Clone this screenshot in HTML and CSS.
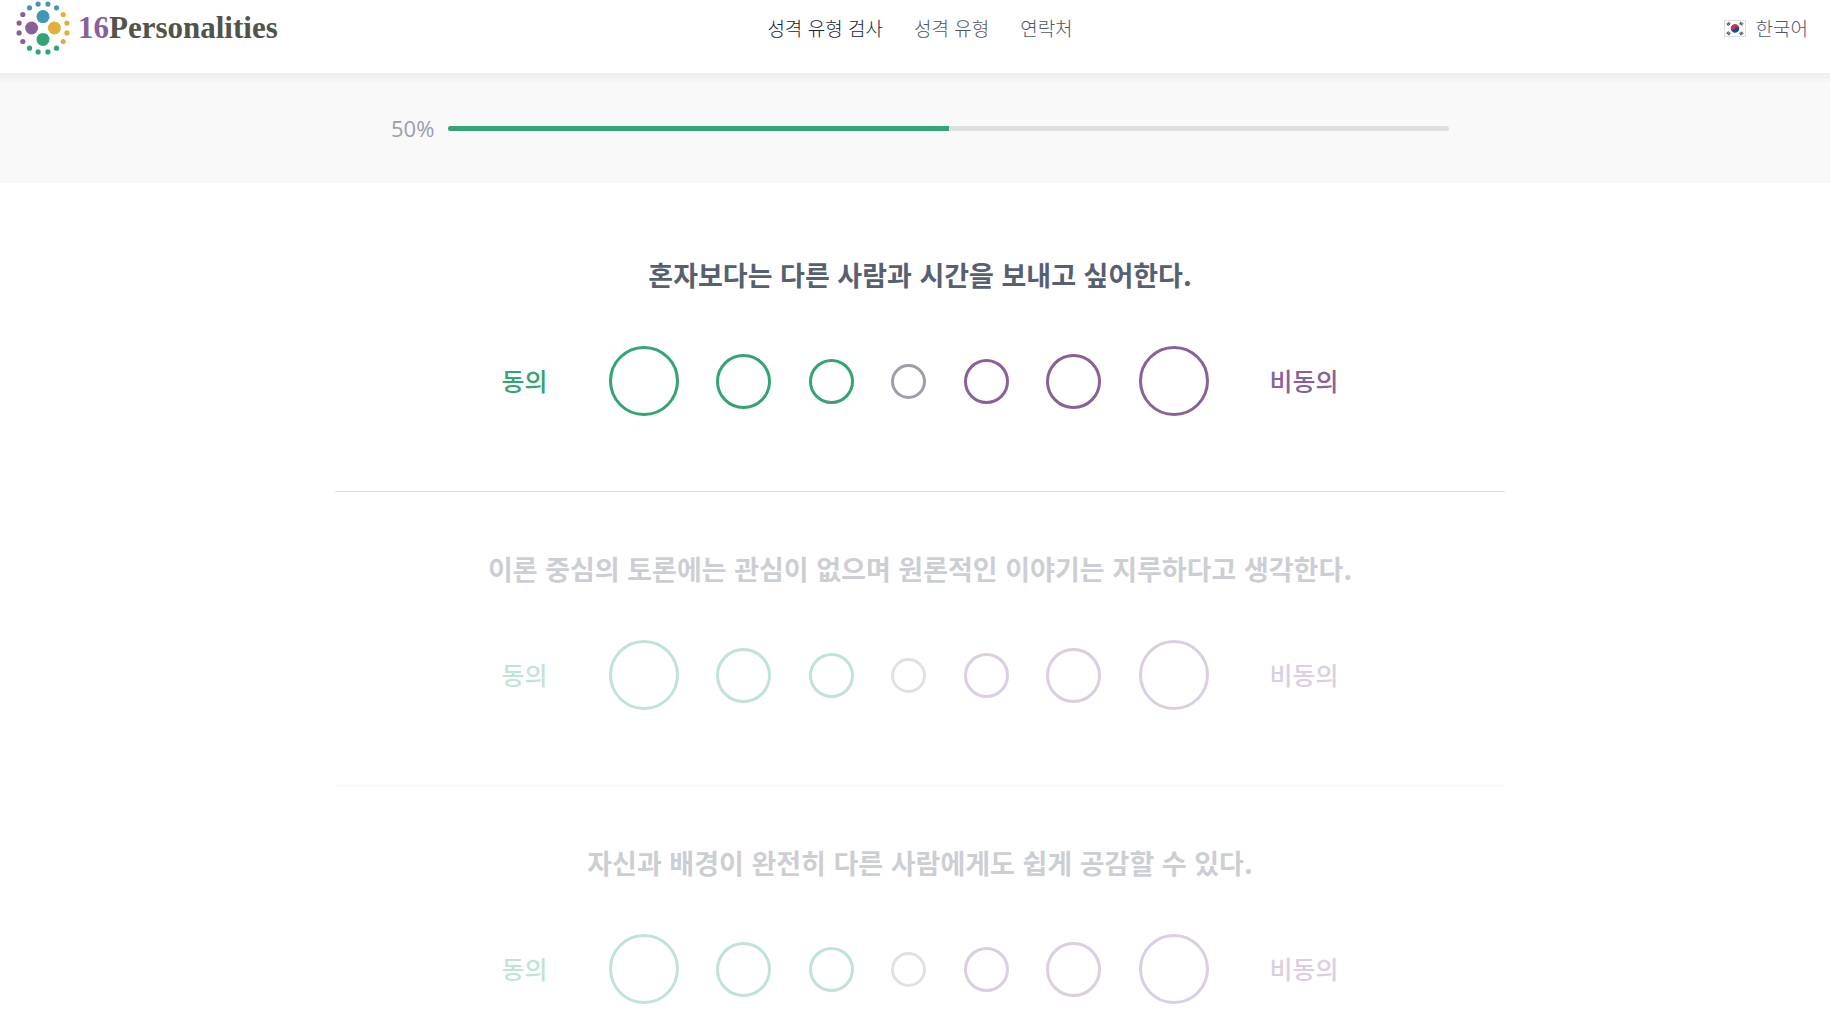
FILE: index.html
```html
<!DOCTYPE html>
<html lang="ko">
<head>
    <meta charset="UTF-8">
    <meta name="viewport" content="width=device-width, initial-scale=1.0">
    <title>성격 유형 검사 | 16Personalities</title>
    <link rel="stylesheet" href="styles.css">
</head>
<body>
    <header class="header">
        <a class="logo" href="#home">
            <svg class="logo-icon" viewBox="-27 -27 54 54" aria-hidden="true">
                <g fill="#4298b4">
                    <circle cx="0" cy="-11.4" r="6.5"/>
                    <circle cx="-13.5" cy="-20.2" r="2.6"/>
                    <circle cx="-4.9" cy="-23.9" r="2.6"/>
                    <circle cx="4.9" cy="-23.9" r="2.6"/>
                    <circle cx="13.5" cy="-20.2" r="2.6"/>
                </g>
                <g fill="#e4ae3a">
                    <circle cx="11.4" cy="0" r="6.5"/>
                    <circle cx="20.2" cy="-13.5" r="2.6"/>
                    <circle cx="23.9" cy="-4.9" r="2.6"/>
                    <circle cx="23.9" cy="4.9" r="2.6"/>
                    <circle cx="20.2" cy="13.5" r="2.6"/>
                </g>
                <g fill="#33a474">
                    <circle cx="0" cy="11.4" r="6.5"/>
                    <circle cx="13.5" cy="20.2" r="2.6"/>
                    <circle cx="4.9" cy="23.9" r="2.6"/>
                    <circle cx="-4.9" cy="23.9" r="2.6"/>
                    <circle cx="-13.5" cy="20.2" r="2.6"/>
                </g>
                <g fill="#88619a">
                    <circle cx="-11.4" cy="0" r="6.5"/>
                    <circle cx="-20.2" cy="13.5" r="2.6"/>
                    <circle cx="-23.9" cy="4.9" r="2.6"/>
                    <circle cx="-23.9" cy="-4.9" r="2.6"/>
                    <circle cx="-20.2" cy="-13.5" r="2.6"/>
                </g>
            </svg>
            <span class="logo-text"><span class="logo-number">16</span>Personalities</span>
        </a>
        <nav class="nav">
            <a class="active" href="#test">성격 유형 검사</a>
            <a href="#types">성격 유형</a>
            <a href="#contact">연락처</a>
        </nav>
        <button class="language" type="button">
            <svg class="flag" viewBox="0 0 22 17" aria-hidden="true">
                <rect x="0.5" y="0.5" width="21" height="16" fill="#fff" stroke="#dfe0e4"/>
                <g transform="rotate(20 11 8.5)">
                    <circle cx="11" cy="8.5" r="4.2" fill="#0b4ea2"/>
                    <path d="M6.8 8.5a4.2 4.2 0 0 1 8.4 0a2.1 2.1 0 0 0-4.2 0a2.1 2.1 0 0 1-4.2 0z" fill="#d8313e"/>
                </g>
                <g stroke="#444" stroke-width="3" stroke-dasharray="1.1 0.4">
                    <path d="M3.2 4.8l2.8-2"/>
                    <path d="M16 2.8l2.8 2"/>
                    <path d="M3.2 12.4l2.8 2"/>
                    <path d="M16 14.4l2.8-2"/>
                </g>
            </svg>
            한국어
        </button>
    </header>

    <section class="progress">
        <div class="progress-inner">
            <label for="progress">50%</label>
            <progress id="progress" class="progress-bar" value="50" max="100">50%</progress>
        </div>
    </section>

    <form class="questions">
        <fieldset class="question">
            <legend>혼자보다는 다른 사람과 시간을 보내고 싶어한다.</legend>
            <div class="decision">
                <span class="caption agree">동의</span>
                <div class="options">
                    <input class="option agree max" type="radio" name="q1" value="3" aria-label="매우 동의">
                    <input class="option agree med" type="radio" name="q1" value="2" aria-label="동의">
                    <input class="option agree min" type="radio" name="q1" value="1" aria-label="약간 동의">
                    <input class="option neutral" type="radio" name="q1" value="0" aria-label="중립">
                    <input class="option disagree min" type="radio" name="q1" value="-1" aria-label="약간 비동의">
                    <input class="option disagree med" type="radio" name="q1" value="-2" aria-label="비동의">
                    <input class="option disagree max" type="radio" name="q1" value="-3" aria-label="매우 비동의">
                </div>
                <span class="caption disagree">비동의</span>
            </div>
        </fieldset>

        <fieldset class="question inactive">
            <legend>이론 중심의 토론에는 관심이 없으며 원론적인 이야기는 지루하다고 생각한다.</legend>
            <div class="decision">
                <span class="caption agree">동의</span>
                <div class="options">
                    <input class="option agree max" type="radio" name="q2" value="3" aria-label="매우 동의">
                    <input class="option agree med" type="radio" name="q2" value="2" aria-label="동의">
                    <input class="option agree min" type="radio" name="q2" value="1" aria-label="약간 동의">
                    <input class="option neutral" type="radio" name="q2" value="0" aria-label="중립">
                    <input class="option disagree min" type="radio" name="q2" value="-1" aria-label="약간 비동의">
                    <input class="option disagree med" type="radio" name="q2" value="-2" aria-label="비동의">
                    <input class="option disagree max" type="radio" name="q2" value="-3" aria-label="매우 비동의">
                </div>
                <span class="caption disagree">비동의</span>
            </div>
        </fieldset>

        <fieldset class="question inactive">
            <legend>자신과 배경이 완전히 다른 사람에게도 쉽게 공감할 수 있다.</legend>
            <div class="decision">
                <span class="caption agree">동의</span>
                <div class="options">
                    <input class="option agree max" type="radio" name="q3" value="3" aria-label="매우 동의">
                    <input class="option agree med" type="radio" name="q3" value="2" aria-label="동의">
                    <input class="option agree min" type="radio" name="q3" value="1" aria-label="약간 동의">
                    <input class="option neutral" type="radio" name="q3" value="0" aria-label="중립">
                    <input class="option disagree min" type="radio" name="q3" value="-1" aria-label="약간 비동의">
                    <input class="option disagree med" type="radio" name="q3" value="-2" aria-label="비동의">
                    <input class="option disagree max" type="radio" name="q3" value="-3" aria-label="매우 비동의">
                </div>
                <span class="caption disagree">비동의</span>
            </div>
        </fieldset>
    </form>
</body>
</html>
```

FILE: styles.css
```css
* {
    box-sizing: border-box;
}
html {
    scrollbar-width: none;
}
body {
    font-family: "Open Sans", "Noto Sans CJK KR", sans-serif;
    margin: 0;
    background-color: #fff;
    color: #576071;
}
.header {
    display: grid;
    grid-template-columns: 1fr auto 1fr;
    align-items: center;
    padding: 1px 6px 18px 16px;
}
.logo {
    display: flex;
    align-items: center;
    gap: 8px;
    text-decoration: none;
}
.logo-icon {
    width: 54px;
    height: 54px;
}
.logo-text {
    font-family: "Liberation Serif", serif;
    font-size: 31px;
    font-weight: bold;
    line-height: 32px;
    color: #52534a;
}
.logo-number {
    color: #88619a;
}
.nav {
    display: flex;
    gap: 31px;
}
.nav a,
.language {
    font-family: "Noto Sans CJK KR", sans-serif;
    font-size: 19px;
    font-weight: 300;
    line-height: 28px;
    color: #4d566a;
    text-decoration: none;
}
.nav a.active {
    color: #1a2233;
}
.language {
    display: flex;
    align-items: center;
    justify-self: end;
    gap: 10px;
    padding: 0 16px;
    border: 0;
    background: none;
    cursor: pointer;
}
.flag {
    width: 22px;
    height: 17px;
}
.progress {
    padding: 35px 0 35px 10px;
    background: linear-gradient(#ededed, #f9f9f9 10px);
}
.progress-inner {
    display: flex;
    align-items: center;
    gap: 14px;
    max-width: 1058px;
    margin: 0 auto;
    font-size: 22px;
    line-height: 40px;
    color: #9b9faa;
}
.progress-bar {
    flex: 1;
    height: 5px;
    border: 0;
    border-radius: 3px;
    overflow: hidden;
    appearance: none;
}
.progress-bar::-webkit-progress-bar {
    background-color: #dedfdf;
}
.progress-bar::-webkit-progress-value {
    background-color: #33a474;
}
.questions {
    padding: 15px 0 0 10px;
}
.question {
    max-width: 1170px;
    margin: 0 auto;
    padding: 57px 0 75px;
    border: 0;
    border-bottom: 1px solid #dedfe0;
}
.question legend {
    float: left;
    width: 100%;
    padding: 0;
    margin-bottom: 51px;
    font-family: "Noto Sans CJK KR", sans-serif;
    font-size: 27px;
    font-weight: bold;
    line-height: 40px;
    text-align: center;
}
.question.inactive {
    opacity: 0.3;
}
.decision {
    clear: both;
    display: flex;
    justify-content: center;
    align-items: center;
    gap: 61px;
}
.options {
    display: flex;
    justify-content: space-between;
    align-items: center;
    width: 600px;
}
.option {
    width: 35px;
    height: 35px;
    margin: 0;
    border: 3px solid;
    border-radius: 50%;
    appearance: none;
    cursor: pointer;
}
.option.min {
    width: 45px;
    height: 45px;
}
.option.med {
    width: 55px;
    height: 55px;
}
.option.max {
    width: 70px;
    height: 70px;
}
.option:checked {
    background-color: currentColor;
}
.caption {
    padding-bottom: 2px;
    font-family: "Noto Sans CJK KR", sans-serif;
    font-size: 25px;
    font-weight: 500;
    line-height: 36px;
}
.agree {
    color: #33a474;
}
.neutral {
    color: #9b9faa;
}
.disagree {
    color: #88619a;
}
```
